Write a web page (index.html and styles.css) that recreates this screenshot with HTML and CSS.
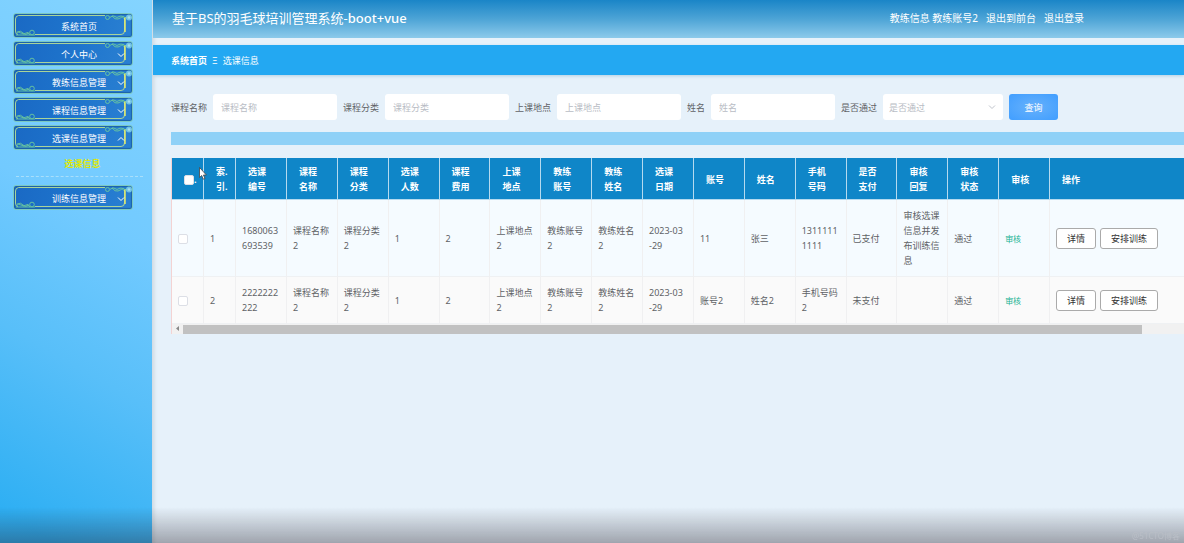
FILE: index.html
```html
<!DOCTYPE html>
<html lang="zh-CN">
<head>
<meta charset="utf-8">
<title>基于BS的羽毛球培训管理系统-boot+vue</title>
<link rel="stylesheet" href="styles.css">
</head>
<body>
<svg class="defs" aria-hidden="true">
  <symbol id="frame" viewBox="0 0 120 25">
    <path d="M92 2.500H5.500Q2.500 3 2.500 6V18Q2.500 21.500 5 21.500M22 21.500H108Q111.500 21.500 111.500 18V5" fill="none" stroke="#a9d49a"/>
    <path d="M112 4V19" stroke="#e3ea6e" stroke-width="1.500"/>
    <g fill="none" stroke="#6cc89c" stroke-width=".9">
      <circle cx="94.500" cy="4.500" r="2"/>
      <path d="M97 4.500q3-3 5-1t4 0 5 2M99 3q3 4 6 3t5-3q2 3 5 2"/>
      <circle cx="19" cy="19.500" r="2.300"/>
      <path d="M3 21q2-3 5-1t5 0 4 2M4 19q4-2 6 1t6 0M3 22H22"/>
    </g>
    <circle cx="116" cy="4.500" r="3" fill="#72c4e6"/>
    <circle cx="116" cy="4.500" r="1.300" fill="#a5dfee"/>
  </symbol>
  <symbol id="down" viewBox="0 0 10 10"><path d="M2 3.500 5 6.500 8 3.500" fill="none" stroke="currentColor"/></symbol>
  <symbol id="up" viewBox="0 0 10 10"><path d="M2 6.500 5 3.500 8 6.500" fill="none" stroke="currentColor"/></symbol>
</svg>
<div class="app">
  <nav class="sidebar">
    <button class="item"><svg class="frame"><use href="#frame"/></svg>系统首页</button>
    <button class="item"><svg class="frame"><use href="#frame"/></svg>个人中心<svg class="arrow"><use href="#down"/></svg></button>
    <button class="item"><svg class="frame"><use href="#frame"/></svg>教练信息管理<svg class="arrow"><use href="#down"/></svg></button>
    <button class="item"><svg class="frame"><use href="#frame"/></svg>课程信息管理<svg class="arrow"><use href="#down"/></svg></button>
    <button class="item"><svg class="frame"><use href="#frame"/></svg>选课信息管理<svg class="arrow"><use href="#up"/></svg></button>
    <a class="sub" href="#">选课信息</a>
    <button class="item"><svg class="frame"><use href="#frame"/></svg>训练信息管理<svg class="arrow"><use href="#down"/></svg></button>
  </nav>
  <main class="main">
    <header class="top">
      <h1 class="title">基于BS的羽毛球培训管理系统-<span class="latin">boot+vue</span></h1>
      <div class="user"><span>教练信息 教练账号2</span><a href="#">退出到前台</a><a href="#">退出登录</a></div>
    </header>
    <div class="crumbs"><a class="home" href="#">系统首页</a><span>Ξ</span><span>选课信息</span></div>
    <div class="content">
      <form class="search">
        <label for="name">课程名称</label><input id="name" class="field" type="text" placeholder="课程名称">
        <label for="kind">课程分类</label><input id="kind" class="field" type="text" placeholder="课程分类">
        <label for="place">上课地点</label><input id="place" class="field" type="text" placeholder="上课地点">
        <label for="person">姓名</label><input id="person" class="field" type="text" placeholder="姓名">
        <label for="pass">是否通过</label>
        <span class="pick"><select id="pass" class="field"><option>是否通过</option></select><svg class="caret"><use href="#down"/></svg></span>
        <button class="query" type="button">查询</button>
      </form>
      <div class="bar"></div>
      <div class="grid">
        <table>
          <colgroup><col class="narrow"><col class="narrow"><col span="16"><col class="wide"></colgroup>
          <thead>
            <tr>
              <th class="all"><input type="checkbox" aria-label="全选">.</th><th class="index">索.<br>引.</th>
              <th>选课编号</th><th>课程名称</th><th>课程分类</th><th>选课人数</th><th>课程费用</th><th>上课地点</th><th>教练账号</th><th>教练姓名</th><th>选课日期</th><th>账号</th><th>姓名</th><th>手机号码</th><th>是否支付</th><th>审核回复</th><th>审核状态</th><th>审核</th><th>操作</th>
            </tr>
          </thead>
          <tbody>
            <tr class="hover">
              <td><input type="checkbox" aria-label="选择第1行"></td><td>1</td><td>1680063693539</td><td>课程名称2</td><td>课程分类2</td><td>1</td><td>2</td><td>上课地点2</td><td>教练账号2</td><td>教练姓名2</td><td>2023-03<br>-29</td><td>11</td><td>张三</td><td>13111111111</td><td>已支付</td><td>审核选课信息并发布训练信息</td><td>通过</td><td><button class="audit">审核</button></td>
              <td><div class="actions"><button>详情</button><button>安排训练</button></div></td>
            </tr>
            <tr>
              <td><input type="checkbox" aria-label="选择第2行"></td><td>2</td><td>2222222222</td><td>课程名称2</td><td>课程分类2</td><td>1</td><td>2</td><td>上课地点2</td><td>教练账号2</td><td>教练姓名2</td><td>2023-03<br>-29</td><td>账号2</td><td>姓名2</td><td>手机号码2</td><td>未支付</td><td></td><td>通过</td><td><button class="audit">审核</button></td>
              <td><div class="actions"><button>详情</button><button>安排训练</button></div></td>
            </tr>
          </tbody>
        </table>
        <div class="scroll"><svg class="left" viewBox="0 0 11 9"><path d="M7 2v5L4 4.500z" fill="#888"/></svg><div class="thumb"></div></div>
      </div>
    </div>
  </main>
</div>
<div class="shade"></div>
<div class="mark">@51CTO博客</div>
<svg class="cursor" viewBox="0 0 8 13"><path d="M.5.500v10l2.200-2 1.600 3.700 1.700-.8-1.600-3.400h3z" fill="#fff" stroke="#444" stroke-width=".8"/></svg>
</body>
</html>
```
FILE: styles.css
```css
* { box-sizing: border-box; }
body {
  margin: 0;
  font: 9px/15px "Noto Sans", "Noto Sans CJK SC", sans-serif;
  color: #606266;
  background: #e6f1fa;
  overflow: hidden;
}
button, input, select { font: inherit; color: inherit; margin: 0; }
a { color: inherit; text-decoration: none; }
.defs { position: absolute; width: 0; height: 0; }
.app { display: flex; min-height: 100vh; }

.sidebar {
  flex: 0 0 152px;
  padding: 13px 9px 0 13px;
  display: flex;
  flex-direction: column;
  align-items: flex-start;
  gap: 3px;
  background: linear-gradient(210deg, #84d4ff 0%, #72caff 40%, #58bff9 65%, #2eaff3 95%);
}
.item {
  position: relative;
  width: 120px;
  height: 25px;
  padding: 1px 0 0 12px;
  border: 1px solid #7cc9c0;
  border-radius: 3px;
  background: linear-gradient(100deg, #1a69c4, #1e74cc 50%, #2a80d2);
  box-shadow: inset 0 0 1px 1px #1c62a8;
  color: #fff;
  text-align: center;
}
.frame { position: absolute; inset: -1px; width: 120px; height: 25px; }
.arrow { position: absolute; right: 6px; top: 8px; width: 10px; height: 10px; }
.sub {
  align-self: stretch;
  height: 24px;
  margin: 0 0 5px 3px;
  padding: 3px 0 0 6px;
  border-bottom: 1px dashed #a9dffb;
  color: #e0e800;
  font-weight: 700;
  text-align: center;
}

.main { flex: 1; min-width: 0; border-left: 1px solid #d3dde5; box-shadow: inset 4px 0 3px -2px #d5e0e8; }
.top {
  height: 38px;
  padding: 0 100px 2px 19px;
  display: flex;
  justify-content: space-between;
  align-items: center;
  color: #fff;
  background: linear-gradient(#1a85c7, #4da4d6 50%, #8ccaeb);
}
.title { margin: 0; font-size: 13px; line-height: 20px; font-weight: 400; }
.latin { font-weight: 500; }
.user { display: flex; gap: 8px; font-size: 10px; }
.crumbs {
  height: 30px;
  margin-top: 7px;
  padding: 0 18px;
  display: flex;
  align-items: center;
  gap: 5px;
  background: #23a8f2;
  box-shadow: 0 1px 3px #b4cfe2;
  color: #fff;
}
.home { font-weight: 700; }

.content { padding: 19px 0 0 18px; }
.search { display: flex; align-items: center; gap: 6px; white-space: nowrap; }
.field {
  width: 124px;
  height: 26px;
  padding: 0 8px;
  border: 0;
  border-radius: 3px;
  background: #fff;
}
.field::placeholder { color: #b8bcc4; opacity: 1; }
.pick { position: relative; display: flex; }
select.field { width: 120px; padding: 0 6px; appearance: none; color: #b8bcc4; }
.caret { position: absolute; right: 6px; top: 8px; width: 10px; height: 10px; color: #c0c4cc; }
.query {
  width: 49px;
  height: 26px;
  padding: 0;
  border: 0;
  border-radius: 3px;
  background: radial-gradient(#67b1fb, #409eff);
  color: #fff;
}
.bar { height: 13px; margin: 12px 0 13px; background: #8fd1f7; }

.grid { border-left: 1px solid #f3d3d3; background: #fafafa; }
table { width: 100%; table-layout: fixed; border-collapse: separate; border-spacing: 0; }
.narrow { width: 32px; }
.wide { width: 134px; }
th, td { text-align: left; vertical-align: middle; word-break: break-all; }
th {
  padding: 6px 12px 5px;
  border-right: 1px solid #b5daef;
  border-bottom: 1px solid #b5daef;
  background: #0f86c8;
  color: #fff;
  font-weight: 700;
}
th.index { padding-right: 0; }
th.all { padding-right: 0; white-space: nowrap; }
td {
  padding: 8px 6px;
  border-right: 1px solid #f0f0f1;
  border-bottom: 1px solid #eff1f3;
}
tr > :last-child { border-right: 0; }
.hover td { background: #f5fbff; }
input[type="checkbox"] {
  appearance: none;
  display: inline-block;
  width: 10px;
  height: 10px;
  border: 1px solid #dcdfe6;
  border-radius: 2px;
  background: #fff;
  vertical-align: middle;
}
.audit { padding: 0; border: 0; background: none; color: #1ab394; font-size: 8px; }
.actions { display: flex; gap: 4px; }
.actions button {
  height: 21px;
  padding: 0 10px;
  border: 1px solid #aaa;
  border-radius: 3px;
  background: #fff;
  color: #333;
}
.scroll { height: 10px; display: flex; padding-right: 42px; background: #f1f1f1; }
.left { flex: 0 0 11px; height: 9px; }
.thumb { flex: 1; margin: 1px 0 0; background: #c1c1c1; }

.shade {
  position: fixed;
  inset: auto 0 0;
  height: 36px;
  background: linear-gradient(rgba(40, 30, 40, 0), rgba(40, 35, 45, .37));
  pointer-events: none;
}
.mark { position: fixed; right: 4px; bottom: 0; font-size: 8px; color: #b9bec6; }
.cursor { position: absolute; left: 199px; top: 167px; width: 8px; height: 13px; }
```
